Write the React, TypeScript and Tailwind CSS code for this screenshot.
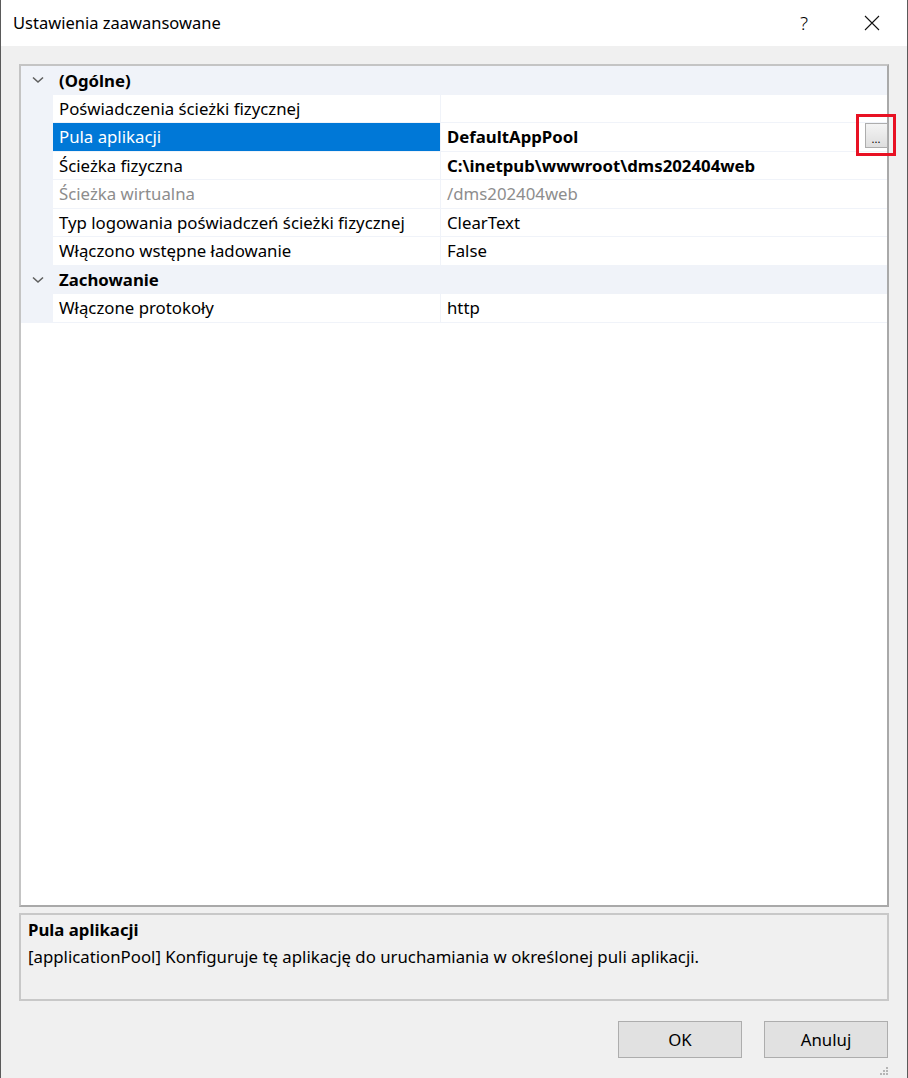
import React from 'react';

const FONT = { fontFamily: '"Noto Sans", "Open Sans", sans-serif' };

type Row = {
  name: string;
  value?: string;
  bold?: boolean;
  grey?: boolean;
  selected?: boolean;
};

const GENERAL: Row[] = [
  { name: 'Poświadczenia ścieżki fizycznej', value: '' },
  { name: 'Pula aplikacji', value: 'DefaultAppPool', bold: true, selected: true },
  { name: 'Ścieżka fizyczna', value: 'C:\\inetpub\\wwwroot\\dms202404web', bold: true },
  { name: 'Ścieżka wirtualna', value: '/dms202404web', grey: true },
  { name: 'Typ logowania poświadczeń ścieżki fizycznej', value: 'ClearText' },
  { name: 'Włączono wstępne ładowanie', value: 'False' },
];

const BEHAVIOR: Row[] = [{ name: 'Włączone protokoły', value: 'http' }];

function Chevron() {
  return (
    <svg width="12" height="8" viewBox="0 0 12 8" className="text-[#5f5f5f]">
      <polyline points="1,1.5 6,6 11,1.5" fill="none" stroke="currentColor" strokeWidth="1.6" />
    </svg>
  );
}

function Category({ title }: { title: string }) {
  return (
    <div className="flex h-[28.5px] items-center bg-[#f0f3f9]">
      <div className="flex w-[32px] justify-center pl-[2px]">
        <Chevron />
      </div>
      <span className="pl-[6px] text-[16.8px] font-bold text-black">{title}</span>
    </div>
  );
}

function PropRow({ row }: { row: Row }) {
  return (
    <div className={`relative flex h-[28.5px] bg-[#f0f3f9] ${row.selected ? 'z-10' : ''}`}>
      <div className="w-[32px] shrink-0" />
      <div
        className={`flex w-[387px] shrink-0 items-center whitespace-nowrap pl-[6px] text-[16.8px] border-b border-[#f0f3f9] ${
          row.selected ? 'bg-[#0078d7] text-white' : row.grey ? 'bg-white text-[#8d8d8d]' : 'bg-white text-black'
        }`}
      >
        {row.name}
      </div>
      <div className="w-px shrink-0 bg-[#f0f3f9]" />
      <div
        className={`flex flex-1 items-center whitespace-nowrap bg-white pl-[6px] text-[16.8px] border-b border-[#f0f3f9] ${
          row.bold ? 'font-bold text-black' : row.grey ? 'text-[#8d8d8d]' : 'text-black'
        }`}
      >
        {row.value}
      </div>
      {row.selected && (
        <div className="absolute right-[-9px] top-[-9px] flex h-[42px] w-[40px] items-center justify-center border-[3px] border-[#e81123]">
          <div className="flex h-[25px] w-[23px] items-end justify-center border border-[#adadad] bg-gradient-to-b from-[#f4f4f4] to-[#dedede] pb-[3px] text-[11px] leading-none text-black">
            ...
          </div>
        </div>
      )}
    </div>
  );
}

function DialogButton({ label }: { label: string }) {
  return (
    <button className="flex h-[37px] w-[124px] items-center justify-center border border-[#adadad] bg-[#e1e1e1] text-[16.8px] text-black">
      {label}
    </button>
  );
}

export default function App() {
  return (
    <div style={FONT} className="flex h-[1078px] w-[908px] flex-col border-x border-[#5a5a5a] bg-[#f0f0f0]">
      {/* title bar */}
      <div className="flex h-[46px] shrink-0 items-center bg-white">
        <span className="pl-[12px] text-[16.5px] text-black">Ustawienia zaawansowane</span>
        <span className="ml-auto mr-[56px] text-[19px] font-light text-black">?</span>
        <svg width="16" height="16" viewBox="0 0 16 16" className="mr-[27px]">
          <path d="M1 1 L15 15 M15 1 L1 15" stroke="#111" strokeWidth="1.1" fill="none" />
        </svg>
      </div>

      <div className="flex flex-1 flex-col px-[18px] pt-[18px]">
        {/* property grid */}
        <div className="h-[843px] border-2 border-[#a9a9a9] border-t-[#c4c4c4] border-l-[#c4c4c4] bg-white">
          <Category title="(Ogólne)" />
          {GENERAL.map((r) => (
            <PropRow key={r.name} row={r} />
          ))}
          <Category title="Zachowanie" />
          {BEHAVIOR.map((r) => (
            <PropRow key={r.name} row={r} />
          ))}
        </div>

        {/* description */}
        <div className="mt-[6px] h-[88px] border-2 border-[#c8c8c8] bg-[#f0f0f0] px-[7px] pt-[3px]">
          <div className="text-[16.8px] font-bold leading-[23px] text-black">Pula aplikacji</div>
          <div className="mt-[4px] text-[16.8px] leading-[23px] text-black">
            [applicationPool] Konfiguruje tę aplikację do uruchamiania w określonej puli aplikacji.
          </div>
        </div>

        {/* buttons */}
        <div className="mt-[20px] flex justify-end gap-[22px] pr-[1px]">
          <DialogButton label="OK" />
          <DialogButton label="Anuluj" />
        </div>

        <div className="mt-auto flex justify-end pb-[2px]">
          <svg width="10" height="10" viewBox="0 0 10 10">
            <rect x="7" y="1" width="2" height="2" fill="#b5b5b5" />
            <rect x="4" y="4" width="2" height="2" fill="#b5b5b5" />
            <rect x="7" y="4" width="2" height="2" fill="#b5b5b5" />
            <rect x="1" y="7" width="2" height="2" fill="#b5b5b5" />
            <rect x="4" y="7" width="2" height="2" fill="#b5b5b5" />
            <rect x="7" y="7" width="2" height="2" fill="#b5b5b5" />
          </svg>
        </div>
      </div>
    </div>
  );
}
